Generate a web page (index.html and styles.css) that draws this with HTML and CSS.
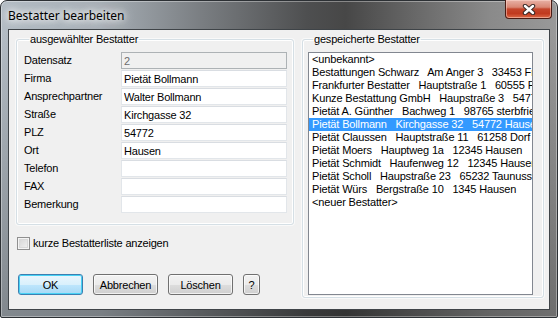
FILE: index.html
```html
<!DOCTYPE html>
<html lang="de">
<head>
  <meta charset="UTF-8">
  <title>Bestatter bearbeiten</title>
  <link rel="stylesheet" href="styles.css">
</head>
<body>

<div class="window">
  <div class="titlebar">
    <span class="title">Bestatter bearbeiten</span>
    <div class="close">
      <svg width="14" height="11" viewBox="0 0 14 11">
        <path d="M3 2 L11 9 M11 2 L3 9" stroke="#3a2a28" stroke-width="4.4" stroke-linecap="round"/>
        <path d="M3 2 L11 9 M11 2 L3 9" stroke="#fff" stroke-width="2.4" stroke-linecap="round"/>
      </svg>
    </div>
  </div>

  <div class="client">
    <div class="left">
      <fieldset class="group group-edit">
        <legend>ausgewählter Bestatter</legend>
        <div class="form">
          <label>Datensatz</label><input class="field" value="2" disabled>
          <label>Firma</label><input class="field" value="Pietät Bollmann">
          <label>Ansprechpartner</label><input class="field" value="Walter Bollmann">
          <label>Straße</label><input class="field" value="Kirchgasse 32">
          <label>PLZ</label><input class="field" value="54772">
          <label>Ort</label><input class="field" value="Hausen">
          <label>Telefon</label><input class="field" value="">
          <label>FAX</label><input class="field" value="">
          <label>Bemerkung</label><input class="field" value="">
        </div>
      </fieldset>

      <div class="check"><span class="checkbox"></span>kurze Bestatterliste anzeigen</div>

      <div class="buttons">
        <button class="btn btn-default">OK</button>
        <button class="btn">Abbrechen</button>
        <button class="btn">Löschen</button>
        <button class="btn btn-small">?</button>
      </div>
    </div>

    <fieldset class="group group-list">
      <legend>gespeicherte Bestatter</legend>
      <div class="listbox">
        <div class="item">&lt;unbekannt&gt;</div>
        <div class="item">Bestattungen Schwarz   Am Anger 3   33453 Frankfurt</div>
        <div class="item">Frankfurter Bestatter   Hauptstraße 1   60555 Frankfurt</div>
        <div class="item">Kunze Bestattung GmbH   Haupstraße 3   54772 Hausen</div>
        <div class="item">Pietät A. Günther   Bachweg 1   98765 sterbfrieden</div>
        <div class="item selected">Pietät Bollmann   Kirchgasse 32   54772 Hausen</div>
        <div class="item">Pietät Claussen   Hauptstraße 11   61258 Dorf</div>
        <div class="item">Pietät Moers   Hauptweg 1a   12345 Hausen</div>
        <div class="item">Pietät Schmidt   Haufenweg 12   12345 Hausen</div>
        <div class="item">Pietät Scholl   Haupstraße 23   65232 Taunusstein</div>
        <div class="item">Pietät Würs   Bergstraße 10   1345 Hausen</div>
        <div class="item">&lt;neuer Bestatter&gt;</div>
      </div>
    </fieldset>
  </div>
</div>

</body>
</html>
```

FILE: styles.css
```css
body {
  margin: 0;
  padding: 0;
  background: #fff;
  font-family: "Liberation Sans", Arial, sans-serif;
  font-size: 11px;
  letter-spacing: -0.2px;
  color: #000;
}
.window {
  width: 558px;
  height: 318px;
  box-sizing: border-box;
  border: 1px solid #2c3034;
  border-radius: 7px 7px 2px 2px;
  background:
    linear-gradient(to bottom, rgba(0,0,0,0) 10%, rgba(0,0,0,0.28) 100%),
    linear-gradient(to right, #b3bcc4 0%, #a7afb6 18%, #7a7e82 36%, #4e4f50 55%, #474747 62%, #6c6c6c 76%, #8a8a8a 88%, #999 100%);
  box-shadow: inset 0 0 0 1px rgba(255,255,255,0.35);
  display: flex;
  flex-direction: column;
}
.titlebar {
  height: 28px;
  display: flex;
  align-items: flex-start;
  justify-content: space-between;
  padding-left: 7px;
}
.title {
  font-family: "Noto Sans", "Open Sans", sans-serif;
  font-size: 12px;
  letter-spacing: 0;
  line-height: 16px;
  margin-top: 7px;
  color: #000;
  text-shadow: 0 0 6px #fff, 0 0 10px #fff, 0 0 14px rgba(255,255,255,0.8);
}
.close {
  width: 45px;
  height: 18px;
  margin-top: -1px;
  margin-right: 5px;
  border: 1px solid #4a1c14;
  border-top: none;
  border-radius: 0 0 4px 4px;
  background: linear-gradient(to bottom, #e8b2a6 0%, #d98774 40%, #c4452b 50%, #c13a1f 75%, #dc6a47 100%);
  box-shadow: inset 0 0 0 1px rgba(255,220,210,0.5);
  display: flex;
  align-items: center;
  justify-content: center;
}
.close svg {
  display: block;
}
.client {
  margin: 0 7px 7px 7px;
  flex: 1;
  background: #f0f0f0;
  border: 1px solid #3f4448;
  display: flex;
  padding: 3px 0 0 7px;
}
.left {
  width: 278px;
  display: flex;
  flex-direction: column;
}
.group {
  margin: 0;
  border: 1px solid #d5dfe5;
  border-radius: 3px;
  box-shadow: inset 0 0 0 1px #fff, 0 0 0 1px rgba(255,255,255,0.6);
  min-width: 0;
}
.group legend {
  padding: 0 1px;
  margin-left: 5px;
  line-height: 13px;
}
.group-edit {
  padding: 6px 6px 11px 7px;
}
.form {
  display: grid;
  grid-template-columns: 97px 166px;
  grid-auto-rows: 17px;
  row-gap: 1px;
}
.form label {
  line-height: 17px;
}
.field {
  box-sizing: border-box;
  width: 166px;
  height: 17px;
  margin: 0;
  padding: 0 2px;
  border: 1px solid #e2e6ea;
  border-top-color: #d9dde2;
  background: #fff;
  font: inherit;
  letter-spacing: inherit;
  color: #000;
  outline: none;
}
.field:disabled {
  background: #f0f0f0;
  border-color: #adb2b5;
  color: #6d6d6d;
}
.check {
  display: flex;
  align-items: center;
  margin-top: 12px;
  margin-left: 1px;
  line-height: 13px;
}
.checkbox {
  width: 11px;
  height: 11px;
  border: 1px solid #8f8f8f;
  background: linear-gradient(135deg, #d2d2d2 0%, #f4f4f4 100%);
  box-shadow: inset 0 0 0 1px #f4f4f4, inset 0 0 0 2px #d8d8d8;
  margin-right: 3px;
}
.buttons {
  display: flex;
  gap: 10px;
  margin-top: 24px;
  margin-left: 2px;
}
.btn {
  box-sizing: border-box;
  width: 65px;
  height: 21px;
  padding: 0;
  border: 1px solid #707070;
  border-radius: 3px;
  background: linear-gradient(to bottom, #f2f2f2 0%, #ebebeb 50%, #dddddd 51%, #cfcfcf 100%);
  box-shadow: inset 0 0 0 1px rgba(255,255,255,0.7);
  font: inherit;
  letter-spacing: inherit;
  color: #000;
}
.btn-default {
  border-color: #3c7fb1;
  background: linear-gradient(to bottom, #eaf6fd 0%, #d9f0fc 50%, #bee6fd 51%, #a7d9f5 100%);
  box-shadow: inset 0 0 0 1px #48d2f5;
}
.btn-small {
  width: 17px;
}
.group-list {
  width: 242px;
  box-sizing: border-box;
  margin-left: 8px;
  height: 265px;
  padding: 6px 10px 2px 5px;
}
.listbox {
  box-sizing: border-box;
  height: 243px;
  border: 1px solid #828790;
  background: #fff;
  overflow: hidden;
}
.item {
  height: 13px;
  line-height: 13px;
  padding-left: 3px;
  letter-spacing: -0.15px;
  white-space: pre;
  overflow: hidden;
}
.item.selected {
  background: #3399ff;
  color: #fff;
}
```
